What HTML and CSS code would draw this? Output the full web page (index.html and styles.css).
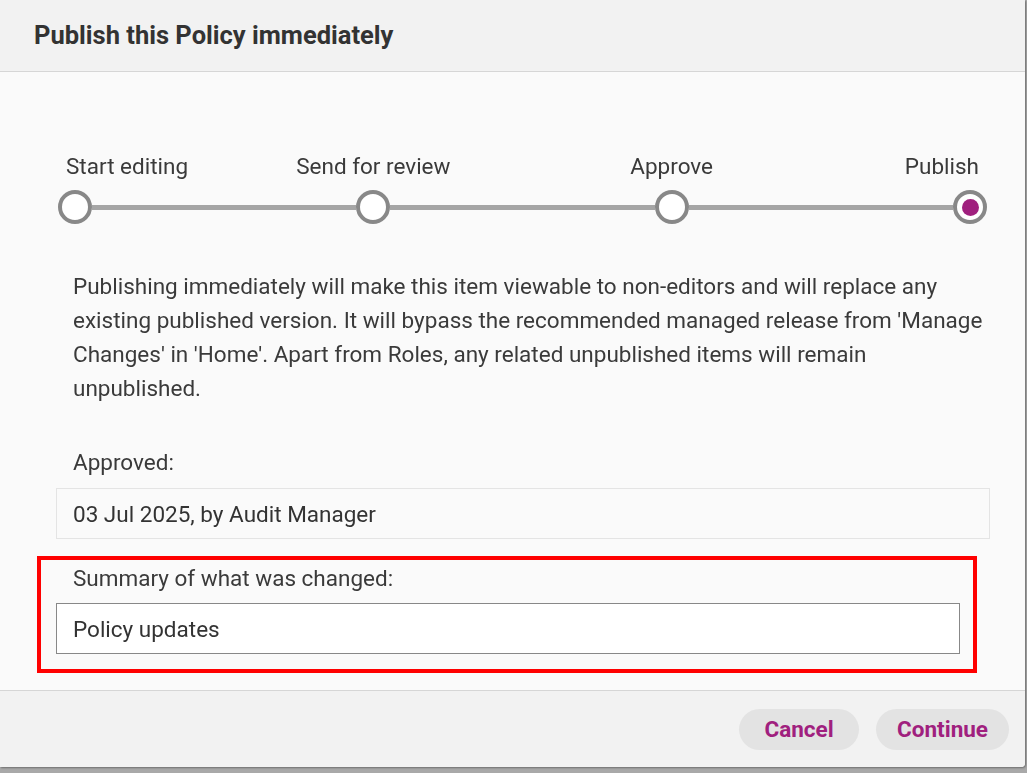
FILE: index.html
```html
<!doctype html>
<html lang="en">
<head>
  <title>Publish this Policy immediately</title>
  <meta charset="utf-8">
  <meta name="viewport" content="width=device-width, initial-scale=1">
  <link rel="stylesheet" href="styles.css">
</head>
<body>
  <div class="page">
    <p class="page-text">y, updated to apply the proper programme</p>
  </div>

  <div class="dialog" role="dialog" aria-labelledby="dialogTitle">
    <div class="dialog-header">
      <h1 id="dialogTitle">Publish this Policy immediately</h1>
    </div>

    <div class="dialog-body">
      <div class="stepper">
        <span class="step-label first">Start editing</span>
        <span class="step-label second">Send for review</span>
        <span class="step-label third">Approve</span>
        <span class="step-label last">Publish</span>

        <span class="step-dot"></span>
        <span class="step-line"></span>
        <span class="step-dot"></span>
        <span class="step-line"></span>
        <span class="step-dot"></span>
        <span class="step-line"></span>
        <span class="step-dot current"></span>
      </div>

      <p class="intro">
        Publishing immediately will make this item viewable to non-editors and will replace any
        existing published version. It will bypass the recommended managed release from 'Manage
        Changes' in 'Home'. Apart from Roles, any related unpublished items will remain
        unpublished.
      </p>

      <div class="field">
        <label class="field-label">Approved:</label>
        <div class="readonly-box">03 Jul 2025, by Audit Manager</div>
      </div>

      <div class="field highlight">
        <label class="field-label" for="summary">Summary of what was changed:</label>
        <input id="summary" class="text-input" type="text" value="Policy updates">
      </div>
    </div>

    <div class="dialog-footer">
      <button type="button" class="btn cancel">Cancel</button>
      <button type="button" class="btn">Continue</button>
    </div>
  </div>
</body>
</html>
```

FILE: styles.css
```css
html, body {
  margin: 0;
  padding: 0;
}

body {
  background-color: #a9a9a9;
  font-family: Roboto, "Liberation Sans", Arial, sans-serif;
  color: #383838;
  overflow: hidden;
}

.page {
  height: 773px;
  padding: 0 0 0 30px;
  box-sizing: border-box;
}

.page-text {
  margin: 0;
  padding-top: 744px;
  font-size: 21px;
  line-height: 24px;
  color: #111111;
}

.dialog {
  position: fixed;
  top: 0;
  left: 0;
  width: 1025px;
  height: 767px;
  display: flex;
  flex-direction: column;
  background-color: #fafafa;
  border-radius: 0 0 4px 0;
  overflow: hidden;
  box-shadow: 1px 1px 2px rgba(0, 0, 0, 0.35);
}

.dialog-header {
  height: 71px;
  padding: 0 34px;
  display: flex;
  align-items: center;
  background-color: #f2f2f2;
  border-bottom: 1px solid #d6d6d6;
}

.dialog-header h1 {
  margin: 0 0 2px 0;
  font-size: 25.5px;
  font-weight: 700;
  color: #333333;
}

.dialog-body {
  flex: 1;
  padding: 82px 35px 0 56px;
}

/* stepper: labels on row 1, circles and lines on row 2 */
.stepper {
  display: grid;
  grid-template-columns: 34px 1fr 34px 1fr 34px 1fr 34px;
  grid-template-rows: 24px 34px;
  row-gap: 12px;
  margin: 0 3px 0 2px;
}

.step-label {
  grid-row: 1;
  font-size: 22.5px;
  line-height: 24px;
  color: #3a3a3a;
  white-space: nowrap;
}

.step-label.first {
  grid-column: 1 / 3;
  padding-left: 8px;
}

.step-label.second {
  grid-column: 2 / 5;
  text-align: center;
}

.step-label.third {
  grid-column: 4 / 7;
  text-align: center;
}

.step-label.last {
  grid-column: 6 / 8;
  text-align: right;
  padding-right: 8px;
}

.step-dot {
  grid-row: 2;
  width: 34px;
  height: 34px;
  box-sizing: border-box;
  border: 4px solid #888888;
  border-radius: 50%;
  background-color: #ffffff;
  display: flex;
  align-items: center;
  justify-content: center;
}

.step-dot.current::after {
  content: "";
  width: 17px;
  height: 17px;
  border-radius: 50%;
  background-color: #a0207e;
}

.step-line {
  grid-row: 2;
  align-self: center;
  height: 5px;
  background-color: #a5a5a5;
}

.intro {
  margin: 45px 0 0 0;
  padding: 0 0 0 17px;
  font-size: 22.5px;
  line-height: 34px;
  color: #3a3a3a;
}

.field {
  margin-top: 40px;
}

.field-label {
  display: block;
  padding-left: 17px;
  font-size: 22.5px;
  line-height: 34px;
  color: #3a3a3a;
}

.readonly-box {
  margin-top: 9px;
  height: 49px;
  padding: 0 16px;
  display: flex;
  align-items: center;
  border: 1px solid #e4e4e4;
  font-size: 22.5px;
  color: #333333;
}

.highlight {
  margin: 17px 0 0 -19px;
  width: 940px;
  box-sizing: border-box;
  border: 4px solid #ff0000;
  padding: 1px 13px 15px 15px;
}

.text-input {
  display: block;
  width: 100%;
  height: 51px;
  margin-top: 8px;
  padding: 0 16px;
  box-sizing: border-box;
  border: 1px solid #888888;
  background-color: #ffffff;
  font-family: Roboto, "Liberation Sans", Arial, sans-serif;
  font-size: 22.5px;
  color: #333333;
  outline: none;
}

.dialog-footer {
  height: 76px;
  padding: 0 16px 0 0;
  display: flex;
  align-items: center;
  justify-content: flex-end;
  gap: 17px;
  background-color: #f2f2f2;
  border-top: 1px solid #d6d6d6;
}

.btn {
  height: 41px;
  padding: 0 21px;
  border: 0;
  border-radius: 21px;
  background-color: #e3e3e3;
  font-family: Roboto, "Liberation Sans", Arial, sans-serif;
  font-size: 22.5px;
  font-weight: 700;
  color: #a0207e;
  cursor: pointer;
}

.btn.cancel {
  min-width: 120px;
}
```
